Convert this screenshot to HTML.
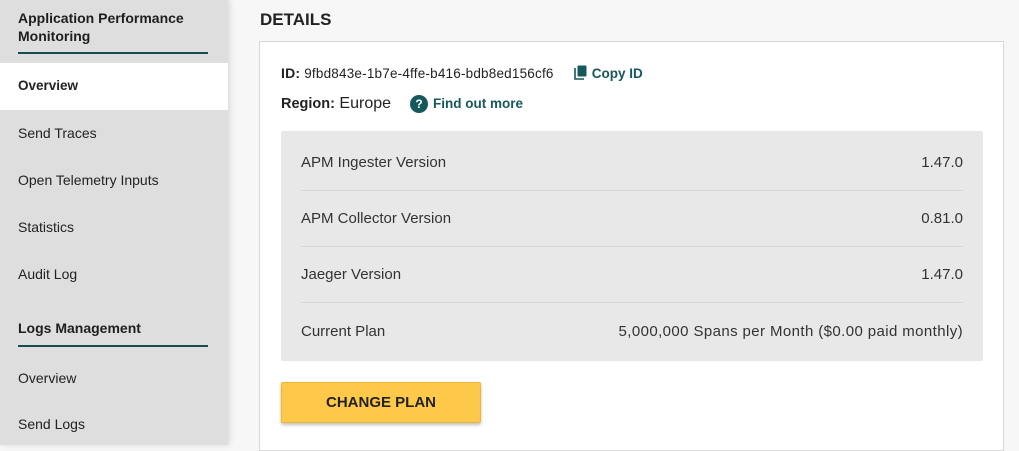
<!DOCTYPE html>
<html><head><style>
*{box-sizing:border-box;margin:0;padding:0}
body{width:1019px;height:439px;overflow:hidden;background:#f7f7f7;font-family:"Liberation Sans",Arial,sans-serif;color:#222;position:relative}
.side{position:absolute;left:0;top:0;width:228px;height:445px;background:#dedede;box-shadow:2px 0 6px rgba(0,0,0,.12)}
.hd{position:absolute;left:18px;font-weight:bold;font-size:14px;line-height:18px;color:#1e1e1e}
.line{position:absolute;left:18px;width:190px;height:2px;background:#164b4f}
.it{position:absolute;left:18px;font-size:14px;color:#222}
.act{position:absolute;left:0;top:63px;width:228px;height:47px;background:#fff}
h2{position:absolute;left:260px;top:10px;font-size:17px;font-weight:bold;color:#222}
.card{position:absolute;left:259px;top:41px;width:745px;height:410px;background:#fff;border:1px solid #d8d8d8}
.tbl{position:absolute;left:281px;top:131px;width:702px;height:230px;background:#e8e8e8;border-radius:2px}
.row{position:absolute;left:20px;right:20px;height:56px;border-bottom:1px solid #d6d6d6;font-size:15px;color:#333;display:flex;justify-content:space-between;align-items:center}
.btn{position:absolute;left:281px;top:382px;width:200px;height:41px;background:#fec84b;border:1px solid #f2b637;border-radius:2px;box-shadow:0 2px 3px rgba(0,0,0,.25);font-weight:bold;font-size:15px;color:#222;text-align:center;line-height:40px}
.teal{color:#17585c;font-weight:bold;font-size:13.5px}
</style></head><body>
<div class="side">
<div class="hd" style="top:9px">Application Performance<br>Monitoring</div>
<div class="line" style="top:52px"></div>
<div class="act"></div>
<div class="it" style="top:78px;font-weight:bold;font-size:13.5px">Overview</div>
<div class="it" style="top:125px">Send Traces</div>
<div class="it" style="top:172px">Open Telemetry Inputs</div>
<div class="it" style="top:219px">Statistics</div>
<div class="it" style="top:266px">Audit Log</div>
<div class="hd" style="top:319px">Logs Management</div>
<div class="line" style="top:345px"></div>
<div class="it" style="top:370px">Overview</div>
<div class="it" style="top:416px">Send Logs</div>
</div>
<h2>DETAILS</h2>
<div class="card"></div>
<div style="position:absolute;left:281px;top:65px;font-size:13.5px;letter-spacing:0.2px"><b style="font-size:14px">ID:</b> 9fbd843e-1b7e-4ffe-b416-bdb8ed156cf6</div>
<div style="position:absolute;left:574px;top:65px" class="teal"><svg width="14" height="15" viewBox="0 0 14 15" style="vertical-align:-2px"><path d="M1 3v11h9" fill="none" stroke="#17585c" stroke-width="1.6"/><rect x="3.5" y="0.5" width="9" height="11" rx="1" fill="#17585c"/></svg> Copy ID</div>
<div style="position:absolute;left:281px;top:95px;font-size:16px"><b style="font-size:14.5px">Region:</b> Europe</div>
<div style="position:absolute;left:410px;top:95px" class="teal"><span style="display:inline-block;width:18px;height:18px;border-radius:50%;background:#17585c;color:#fff;text-align:center;line-height:18px;font-size:12px;margin-right:5px">?</span>Find out more</div>
<div class="tbl">
<div class="row" style="top:4px"><span>APM Ingester Version</span><span>1.47.0</span></div>
<div class="row" style="top:60px"><span>APM Collector Version</span><span>0.81.0</span></div>
<div class="row" style="top:116px"><span>Jaeger Version</span><span>1.47.0</span></div>
<div class="row" style="top:172px;border:none"><span>Current Plan</span><span style="letter-spacing:0.4px">5,000,000 Spans per Month ($0.00 paid monthly)</span></div>
</div>
<div class="btn">CHANGE PLAN</div>
</body></html>
